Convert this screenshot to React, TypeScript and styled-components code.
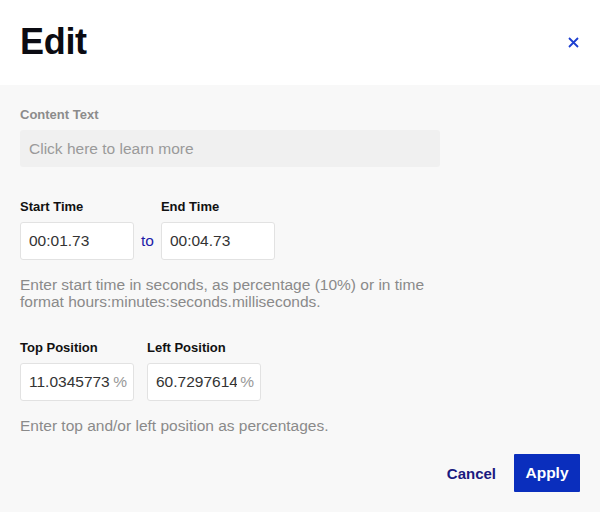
import React from 'react';
import styled, { createGlobalStyle } from 'styled-components';

const GlobalStyle = createGlobalStyle`
  html, body {
    margin: 0;
    padding: 0;
    background: #f8f8f8;
    font-family: "Liberation Sans", Arial, sans-serif;
  }
`;

const Dialog = styled.div`
  width: 600px;
  height: 512px;
  display: flex;
  flex-direction: column;
  background: #f8f8f8;
`;

const Header = styled.div`
  height: 85px;
  background: #ffffff;
  display: flex;
  align-items: center;
  justify-content: space-between;
  padding: 0 20px;
  box-sizing: border-box;
`;

const Title = styled.h1`
  margin: 0;
  font-size: 36px;
  font-weight: 800;
  color: #0b0b12;
  letter-spacing: -0.3px;
  padding-bottom: 1px;
`;

const CloseButton = styled.button`
  border: 0;
  background: none;
  padding: 0;
  margin-right: 1px;
  display: flex;
  cursor: pointer;
`;

const Body = styled.div`
  flex: 1;
  padding: 22px 20px 0;
  display: flex;
  flex-direction: column;
`;

const Label = styled.div<{ $muted?: boolean }>`
  font-size: 13px;
  font-weight: 700;
  color: ${p => (p.$muted ? '#8c8c8c' : '#111')};
  margin-bottom: 7px;
  line-height: 16px;
`;

const WideInput = styled.input`
  width: 420px;
  height: 37px;
  box-sizing: border-box;
  border: 0;
  border-radius: 3px;
  background: #f0f0f0;
  padding: 0 9px;
  font-family: inherit;
  font-size: 15.5px;
  color: #333;
  &::placeholder {
    color: #9a9a9a;
  }
`;

const Row = styled.div<{ $gap: number; $top: number }>`
  display: flex;
  align-items: flex-end;
  gap: ${p => p.$gap}px;
  margin-top: ${p => p.$top}px;
`;

const Field = styled.div`
  display: flex;
  flex-direction: column;
`;

const Box = styled.div`
  width: 114px;
  height: 38px;
  box-sizing: border-box;
  background: #fff;
  border: 1px solid #e2e2e2;
  border-radius: 3px;
  display: flex;
  align-items: center;
  padding: 0 6px 0 8px;
  font-size: 15.5px;
  color: #333;
`;

const BoxValue = styled.span`
  flex: 1;
  white-space: nowrap;
  overflow: hidden;
`;

const Suffix = styled.span`
  color: #999;
  margin-left: 3px;
`;

const To = styled.span`
  color: #1c1ca8;
  font-size: 15.5px;
  height: 38px;
  display: flex;
  align-items: center;
  padding-top: 1px;
`;

const Help = styled.p<{ $top: number }>`
  margin: ${p => p.$top}px 0 0;
  font-size: 15.5px;
  line-height: 17px;
  color: #8a8a8a;
  max-width: 420px;
`;

const Footer = styled.div`
  margin-top: 20px;
  display: flex;
  justify-content: flex-end;
  align-items: center;
  gap: 18px;
`;

const Cancel = styled.button`
  border: 0;
  background: none;
  font-family: inherit;
  font-size: 15px;
  font-weight: 700;
  color: #1a1a80;
  padding: 0;
  cursor: pointer;
`;

const Apply = styled.button`
  width: 66px;
  height: 38px;
  border: 0;
  border-radius: 1px;
  background: #0a2ebd;
  color: #fff;
  font-family: inherit;
  font-size: 15.5px;
  font-weight: 700;
  cursor: pointer;
`;

const App = (): React.ReactElement => {
  return (
    <Dialog>
      <GlobalStyle />
      <Header>
        <Title>Edit</Title>
        <CloseButton aria-label="Close">
          <svg width="11" height="11" viewBox="0 0 11 11">
            <path d="M1 1L10 10M10 1L1 10" stroke="#1d3fd0" strokeWidth="1.8" />
          </svg>
        </CloseButton>
      </Header>
      <Body>
        <Label $muted>Content Text</Label>
        <WideInput placeholder="Click here to learn more" />

        <Row $gap={7} $top={32}>
          <Field>
            <Label>Start Time</Label>
            <Box><BoxValue>00:01.73</BoxValue></Box>
          </Field>
          <To>to</To>
          <Field>
            <Label>End Time</Label>
            <Box><BoxValue>00:04.73</BoxValue></Box>
          </Field>
        </Row>
        <Help $top={16}>
          Enter start time in seconds, as percentage (10%) or in time format hours:minutes:seconds.milliseconds.
        </Help>

        <Row $gap={13} $top={30}>
          <Field>
            <Label>Top Position</Label>
            <Box><BoxValue>11.0345773</BoxValue><Suffix>%</Suffix></Box>
          </Field>
          <Field>
            <Label>Left Position</Label>
            <Box><BoxValue>60.7297614</BoxValue><Suffix>%</Suffix></Box>
          </Field>
        </Row>
        <Help $top={16}>Enter top and/or left position as percentages.</Help>

        <Footer>
          <Cancel>Cancel</Cancel>
          <Apply>Apply</Apply>
        </Footer>
      </Body>
    </Dialog>
  );
};

export default App;
